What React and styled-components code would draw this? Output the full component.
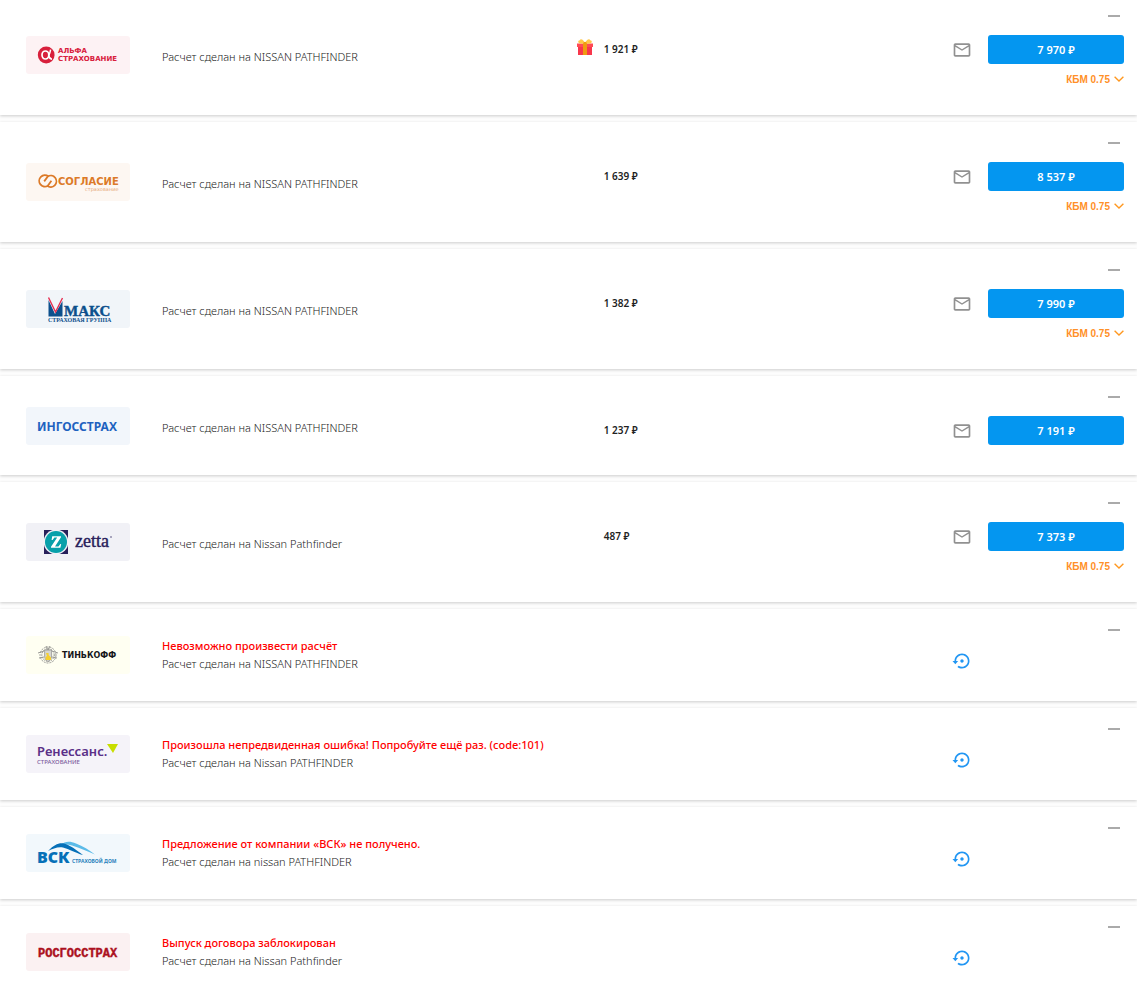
import React from 'react';
import styled, { createGlobalStyle, css } from 'styled-components';

const GlobalStyle = createGlobalStyle`
  body {
    margin: 0;
    background: #fdfdfd;
    font-family: 'Noto Sans', 'Open Sans', sans-serif;
    color: #222;
  }
`;

// Insurance company logos, all drawn on the same 104x38 plate
const AlfaLogo = () => (
  <>
    <circle cx="20.2" cy="19" r="8.4" fill="#d8203c" />
    <ellipse cx="19.4" cy="19" rx="3.4" ry="4" fill="none" stroke="#fff" strokeWidth="1.7" />
    <path d="M24.6 13.6 C24 17 23 19 22.8 19.4 C23 21.4 24 23 26 23.2" fill="none" stroke="#fff" strokeWidth="1.5" />
    <LogoText x="32" y="17" $size={7} $color="#d8203c">АЛЬФА</LogoText>
    <LogoText x="32" y="25" $size={7} $color="#d8203c">СТРАХОВАНИЕ</LogoText>
  </>
);

const SoglasieLogo = () => (
  <>
    <g fill="none" stroke="#dc7a28" strokeWidth="1.8">
      <path d="M22.4 13.4 A5.7 5.7 0 1 0 21.8 22.8 L25.4 17.8" />
      <path d="M21.2 22.8 A5.7 5.7 0 1 0 21.8 13.4 L18.2 18.4" />
    </g>
    <LogoText x="32" y="22" $size={10} $color="#dc7a28">СОГЛАСИЕ</LogoText>
    <LogoText x="59" y="28" $size={5} $weight={400} $color="#e6a878">страхование</LogoText>
  </>
);

const MaksLogo = () => (
  <>
    <path d="M22.5 10 L29 24 L36.5 11 V26.5 H22.5 Z" fill="#0c4f8c" />
    <path d="M22.5 7.5 L29.5 22 L36.5 8" fill="none" stroke="#e62e50" strokeWidth="1.4" />
    <LogoText x="38" y="26" $size={15} $font="'Liberation Serif', serif" $color="#0c4f8c" $outline>МАКС</LogoText>
    <LogoText x="22" y="32" $size={6} $font="'Liberation Serif', serif" $color="#0c4f8c">СТРАХОВАЯ ГРУППА</LogoText>
  </>
);

const IngosLogo = () => (
  <LogoText x="11" y="24" $size={12} $font="'Noto Sans', sans-serif" $color="#1e62c0">ИНГОССТРАХ</LogoText>
);

const ZettaLogo = () => (
  <>
    <path d="M18 7 H42 V31 H18 Z" fill="#28205a" />
    <circle cx="30" cy="19" r="12.4" fill="#f1f1f6" />
    <circle cx="30" cy="19" r="11" fill="#08a0aa" />
    <path d="M25.6 17 L26.2 13.2 H35 V14.2 L29 23.4 H32.4 L34.4 21 H35.2 L34.4 24.8 H25 V23.8 L31.2 14.6 H28.4 L26.6 17 Z" fill="#fff" />
    <LogoText x="49" y="24" $size={18} $weight={400} $font="'Liberation Serif', serif" $color="#28205a" $outline>zetta</LogoText>
    <circle cx="85" cy="14" r="0.7" fill="#28205a" />
  </>
);

const TinkoffLogo = () => (
  <>
    <g fill="none" stroke="#9a9a96" strokeWidth="1">
      <circle cx="22" cy="19" r="8" strokeDasharray="2 1" />
      <circle cx="22" cy="19" r="6.2" strokeDasharray="1.4 1.2" stroke="#777" />
      <path d="M12 17 L18 15 M32 17 L26 15 M13 22 L18 21 M31 22 L26 21 M20 10 L22 14 L24 10" />
    </g>
    <path d="M18.6 14 H25.6 V20 C25.6 23 23.8 24.6 22 25.6 C20 24.6 18.6 23 18.6 20 Z" fill="#d6d6d0" stroke="#888" strokeWidth="0.7" />
    <path d="M20 17 H22.6 L22.6 19 L25 21.4 V24 H19.6 V21 L21 20 Z" fill="#f5cf30" />
    <LogoText x="36" y="22" $size={8} $color="#16161a">ТИНЬКОФФ</LogoText>
  </>
);

const RenessansLogo = () => (
  <>
    <LogoText x="11" y="21" $size={13} $weight={600} $font="'Noto Sans', sans-serif" $color="#5a3088">Ренессанс.</LogoText>
    <LogoText x="11" y="29" $size={6} $weight={500} $font="'Noto Sans', sans-serif" $color="#7d5ca0">СТРАХОВАНИЕ</LogoText>
    <path d="M81 9 H92 L87 18 Z" fill="#c8de00" />
  </>
);

const VskLogo = () => (
  <>
    <path d="M35 11 C39 7 44 7 50 9.6 C57 12.4 63 16 69 20.4 C61 17.4 54 14 46 11.6 C42 10.4 39 10.4 35 11 Z" fill="#5cbbe8" />
    <path d="M22 17 C28 11 33 8.4 38 9.6 C44 11 50 16 57 21 C49 18.6 43 14.8 37 13.4 C32 12.4 27 14.4 22 17 Z" fill="#0670b8" />
    <LogoText x="11" y="29" $size={16} $font="'Noto Sans', sans-serif" $weight={900} $color="#0670b8">ВСК</LogoText>
    <LogoText x="46" y="29" $size={5} $font="'Noto Sans', sans-serif" $weight={700} $color="#2a83bd">СТРАХОВОЙ ДОМ</LogoText>
  </>
);

const RosgosLogo = () => (
  <LogoText x="12" y="24" $size={12} $font="'Liberation Mono', monospace" $color="#ab1020" $outline>РОСГОССТРАХ</LogoText>
);

const MailIcon = () => (
  <Icon viewBox="0 0 24 24" fill="#919191" aria-hidden="true">
    <path d="M20 4H4c-1.1 0-1.99.9-1.99 2L2 18c0 1.1.9 2 2 2h16c1.1 0 2-.9 2-2V6c0-1.1-.9-2-2-2zm0 14H4V8l8 5 8-5v10zm-8-7L4 6h16l-8 5z" />
  </Icon>
);

const RetryIcon = () => (
  <Icon viewBox="0 0 24 24" fill="#2196f3" aria-hidden="true">
    <path d="M14 12c0-1.1-.9-2-2-2s-2 .9-2 2 .9 2 2 2 2-.9 2-2zm-2-9c-4.97 0-9 4.03-9 9H.6l3.4 4 3.4-4H5c0-3.87 3.13-7 7-7s7 3.13 7 7-3.13 7-7 7c-1.51 0-2.91-.49-4.06-1.3l-1.42 1.44C8.04 20.3 9.94 21 12 21c4.97 0 9-4.03 9-9s-4.03-9-9-9z" />
  </Icon>
);

const GiftIcon = () => (
  <GiftSvg viewBox="0 0 16 16" role="img" aria-label="Подарок">
    <path d="M1 7 H15 V16 H1 Z" fill="#f8374c" />
    <path d="M0 4.5 H16 V8 H0 Z" fill="#ff4b55" />
    <path d="M7 4.5 C4 5 1 4.5 1.2 2.2 C1.4 1 2.6 2 3.4 0.4 C5.4 0 7 2 8 4 C9 2 10.6 0 12.6 0.4 C13.4 2 14.6 1 14.8 2.2 C15 4.5 12 5 9 4.5 Z" fill="#ffc84a" />
    <path d="M6 4.5 L7 3 H9 L10 4.5 V16 H6 Z" fill="#f09a10" />
  </GiftSvg>
);

const offers = [
  { id: 'alfa', logo: AlfaLogo, plate: '#fdf2f4', name: 'АльфаСтрахование', car: 'NISSAN PATHFINDER', bonus: '1 921 ₽', gift: true, price: '7 970 ₽', kbm: '0.75' },
  { id: 'soglasie', logo: SoglasieLogo, plate: '#fdf7f2', name: 'Согласие', car: 'NISSAN PATHFINDER', bonus: '1 639 ₽', price: '8 537 ₽', kbm: '0.75' },
  { id: 'maks', logo: MaksLogo, plate: '#f1f5f9', name: 'Макс', car: 'NISSAN PATHFINDER', bonus: '1 382 ₽', price: '7 990 ₽', kbm: '0.75' },
  { id: 'ingos', logo: IngosLogo, plate: '#f2f6fb', name: 'Ингосстрах', car: 'NISSAN PATHFINDER', bonus: '1 237 ₽', price: '7 191 ₽' },
  { id: 'zetta', logo: ZettaLogo, plate: '#f1f1f6', name: 'Zetta', car: 'Nissan Pathfinder', bonus: '487 ₽', price: '7 373 ₽', kbm: '0.75' },
  { id: 'tinkoff', logo: TinkoffLogo, plate: '#fffff2', name: 'Тинькофф', car: 'NISSAN PATHFINDER', error: 'Невозможно произвести расчёт' },
  { id: 'renessans', logo: RenessansLogo, plate: '#f5f3f9', name: 'Ренессанс', car: 'Nissan PATHFINDER', error: 'Произошла непредвиденная ошибка! Попробуйте ещё раз. (code:101)' },
  { id: 'vsk', logo: VskLogo, plate: '#f2f8fc', name: 'ВСК', car: 'nissan PATHFINDER', error: 'Предложение от компании «ВСК» не получено.' },
  { id: 'rosgos', logo: RosgosLogo, plate: '#fbf1f2', name: 'Росгосстрах', car: 'Nissan Pathfinder', error: 'Выпуск договора заблокирован' }
];

const OfferCard = ({ offer }) => {
  const Logo = offer.logo;

  return (
    <Card $failed={!!offer.error}>
      <LogoPlate viewBox="0 0 104 38" $plate={offer.plate} role="img" aria-label={offer.name}>
        <Logo />
      </LogoPlate>

      <Info $single={!offer.error}>
        {offer.error && <ErrorText>{offer.error}</ErrorText>}
        <CarText>Расчет сделан на {offer.car}</CarText>
      </Info>

      <Bonus>
        <GiftSlot>{offer.gift && <GiftIcon />}</GiftSlot>
        {offer.bonus}
      </Bonus>

      <IconCell $retry={!!offer.error}>
        <IconButton type="button" aria-label={offer.error ? 'Повторить расчёт' : 'Отправить на почту'}>
          {offer.error ? <RetryIcon /> : <MailIcon />}
        </IconButton>
      </IconCell>

      <Actions>
        <CollapseButton type="button" aria-label="Свернуть" />
        {offer.price && <PriceButton type="button">{offer.price}</PriceButton>}
        {offer.kbm && (
          <KbmButton type="button">
            КБМ {offer.kbm}
            <Chevron viewBox="0 0 10 6" aria-hidden="true">
              <path d="M0.6 0.8 L5 5 L9.4 0.8" />
            </Chevron>
          </KbmButton>
        )}
      </Actions>
    </Card>
  );
};

const App = () => (
  <>
    <GlobalStyle />
    <OfferList>
      {offers.map((offer) => (
        <OfferCard key={offer.id} offer={offer} />
      ))}
    </OfferList>
  </>
);

// Styled components
const resetButton = css`
  padding: 0;
  border: 0;
  background: none;
  cursor: pointer;
`;

const OfferList = styled.ul`
  display: flex;
  flex-direction: column;
  gap: 7px;
  margin: -5px 0 0;
  padding: 0;
  list-style: none;
`;

const Card = styled.li`
  display: grid;
  grid-template-columns: 136px minmax(0, 21fr) minmax(0, 19fr) 36px 136px;
  min-height: ${({ $failed }) => ($failed ? 92 : 99)}px;
  padding: 0 13px 0 26px;
  background: #fff;
  box-shadow: 0 1px 3px rgba(0, 0, 0, 0.2);
`;

const LogoPlate = styled.svg`
  align-self: center;
  width: 104px;
  height: 38px;
  border-radius: 3px;
  background: ${({ $plate }) => $plate};
`;

const LogoText = styled.text`
  font-family: ${({ $font }) => $font || "'DejaVu Sans', sans-serif"};
  font-size: ${({ $size }) => $size}px;
  font-weight: ${({ $weight }) => $weight || 700};
  fill: ${({ $color }) => $color};
  ${({ $outline, $color }) => $outline && css`
    stroke: ${$color};
    stroke-width: 0.4;
  `}
`;

const Info = styled.div`
  align-self: center;
  padding-top: ${({ $single }) => ($single ? 4 : 0)}px;
  font-size: 11px;
  line-height: 18px;
`;

const ErrorText = styled.div`
  font-weight: 500;
  color: #f00;
`;

const CarText = styled.div`
  font-weight: 300;
  color: #222;
`;

const Bonus = styled.div`
  display: flex;
  align-items: center;
  height: 16px;
  margin-top: 46px;
  font-size: 10px;
  font-weight: 600;
`;

const GiftSlot = styled.span`
  display: flex;
  width: 27px;
  padding-bottom: 4px;
`;

const GiftSvg = styled.svg`
  width: 16px;
  height: 16px;
`;

const IconCell = styled.div`
  padding-top: ${({ $retry }) => ($retry ? 42 : 45)}px;
`;

const IconButton = styled.button`
  ${resetButton}
  display: flex;
`;

const Icon = styled.svg`
  width: 20px;
  height: 20px;
`;

const Actions = styled.div`
  display: flex;
  flex-direction: column;
  padding-bottom: 29px;
`;

const CollapseButton = styled.button`
  ${resetButton}
  align-self: flex-end;
  width: 20px;
  height: 40px;
  padding: 2px 4px 0;

  &:before {
    content: '';
    display: block;
    width: 12px;
    height: 2px;
    background: #aaa;
  }
`;

const PriceButton = styled.button`
  height: 29px;
  padding: 0;
  border: 0;
  border-radius: 3px;
  background: #0496f0;
  color: #fff;
  font-family: inherit;
  font-size: 11px;
  font-weight: 600;
  cursor: pointer;
`;

const KbmButton = styled.button`
  ${resetButton}
  display: flex;
  align-items: center;
  align-self: flex-end;
  gap: 4px;
  height: 14px;
  margin-top: 8px;
  font-family: 'Liberation Sans', sans-serif;
  font-size: 10px;
  font-weight: 700;
  color: #ff9028;
`;

const Chevron = styled.svg`
  width: 10px;
  height: 6px;
  fill: none;
  stroke: #ff9820;
  stroke-width: 1.4;
`;

export default App;
